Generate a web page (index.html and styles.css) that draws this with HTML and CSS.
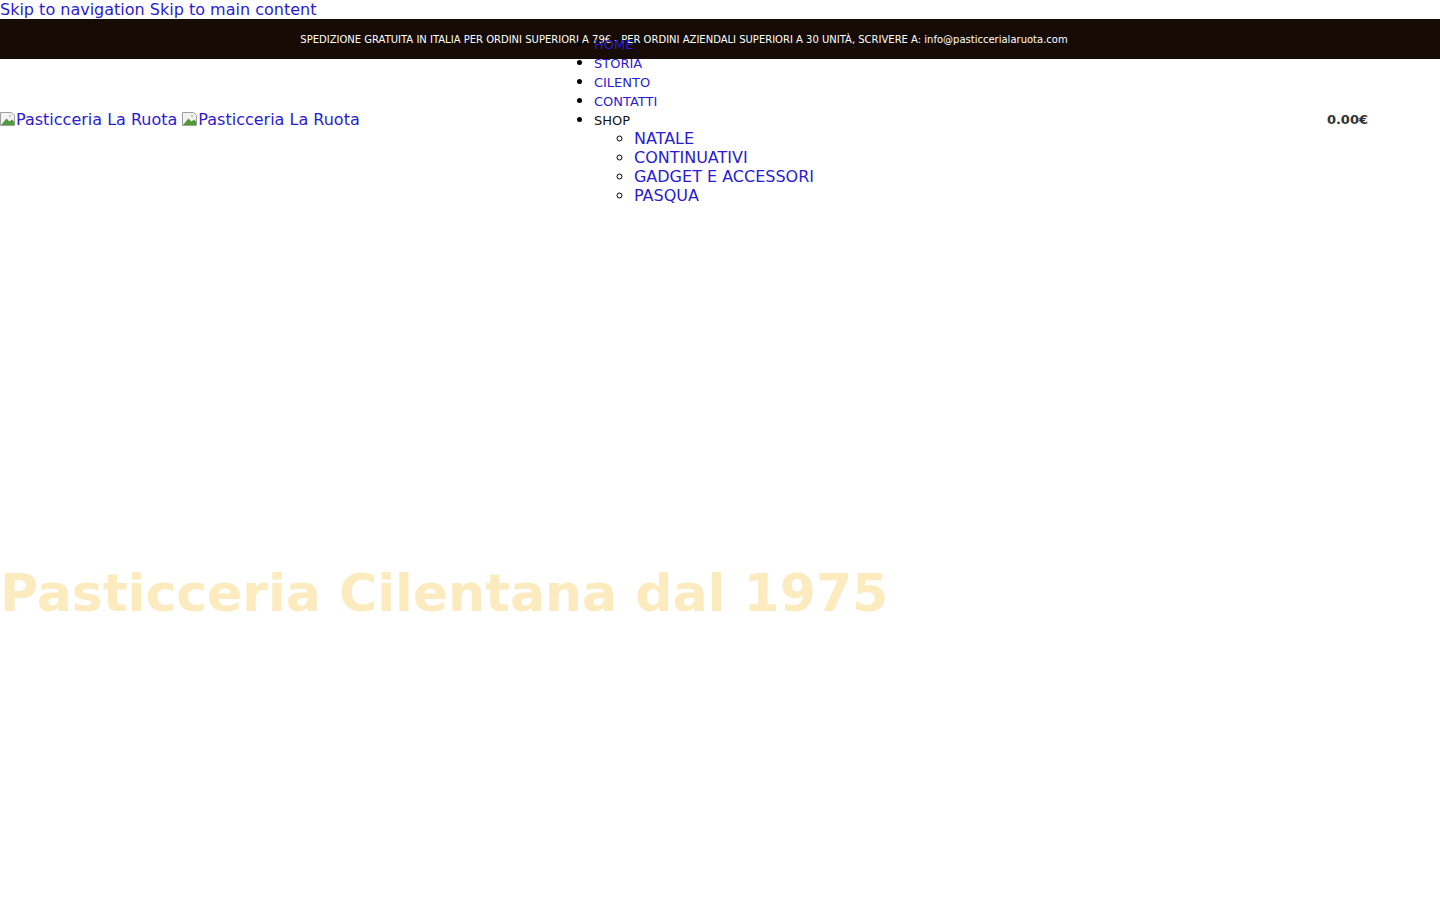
FILE: index.html
```html
<!DOCTYPE html>
<html lang="it">
<head>
<meta charset="utf-8">
<title>Pasticceria La Ruota</title>
<link rel="stylesheet" href="styles.css">
</head>
<body>
<div class="skips"><a href="#nav" class="link">Skip to navigation</a> <a href="#main" class="link">Skip to main content</a></div>
<div class="topbar">
  <div class="topbar-inner">SPEDIZIONE GRATUITA IN ITALIA PER ORDINI SUPERIORI A 79€ - PER ORDINI AZIENDALI SUPERIORI A 30 UNITÀ, SCRIVERE A: info@pasticcerialaruota.com</div>
</div>
<header class="header">
  <div class="logo">
    <a href="#" class="link logo-link"><svg class="broken" width="16" height="16" viewBox="0 0 16 16"><path d="M0.5 1.5h11l3 3v10h-14z" fill="#f2f2f2" stroke="#a0a0a0"/><path d="M1 14 L6.5 7.5 L9.5 10.5 L12 8.5 L14 10.5 V14Z" fill="#4f9a3a"/><circle cx="10" cy="5" r="1.3" fill="#c9c9c9"/></svg>Pasticceria La Ruota</a>
    <a href="#" class="link logo-link"><svg class="broken" width="16" height="16" viewBox="0 0 16 16"><path d="M0.5 1.5h11l3 3v10h-14z" fill="#f2f2f2" stroke="#a0a0a0"/><path d="M1 14 L6.5 7.5 L9.5 10.5 L12 8.5 L14 10.5 V14Z" fill="#4f9a3a"/><circle cx="10" cy="5" r="1.3" fill="#c9c9c9"/></svg>Pasticceria La Ruota</a>
  </div>
  <nav id="nav" class="nav">
    <ul class="menu">
      <li><a href="#" class="link top-item">HOME</a></li>
      <li><a href="#" class="link top-item">STORIA</a></li>
      <li><a href="#" class="link top-item">CILENTO</a></li>
      <li><a href="#" class="link top-item">CONTATTI</a></li>
      <li><span class="plain top-item">SHOP</span>
        <ul class="submenu">
          <li><a href="#" class="link">NATALE</a></li>
          <li><a href="#" class="link">CONTINUATIVI</a></li>
          <li><a href="#" class="link">GADGET E ACCESSORI</a></li>
          <li><a href="#" class="link">PASQUA</a></li>
        </ul>
      </li>
    </ul>
  </nav>
  <div class="cart"><span class="cart-total">0.00€</span></div>
</header>
<main id="main" class="hero">
  <h1 class="hero-title">Pasticceria Cilentana dal 1975</h1>
</main>
</body>
</html>
```
FILE: styles.css
```css
html, body {
  margin: 0;
  padding: 0;
  background: #ffffff;
  font-family: "DejaVu Sans", sans-serif;
  font-size: 16px;
  color: #000;
}
.link {
  color: #2b1ccf;
  text-decoration: none;
}
.skips {
  height: 19px;
  line-height: 19px;
  font-size: 16px;
}
.topbar {
  background: #170c05;
  height: 40px;
}
.topbar-inner {
  width: 1368px;
  text-align: center;
  color: #ffffff;
  font-size: 10px;
  line-height: 40px;
  padding-top: 1px;
}
.header {
  width: 1368px;
  height: 120px;
  display: flex;
  align-items: center;
}
.logo {
  flex: 1 1 0;
  display: flex;
  align-items: center;
  gap: 5px;
  font-size: 16px;
  line-height: 19px;
}
.logo-link {
  display: inline-flex;
  align-items: center;
}
.broken {
  display: block;
  flex: none;
}
.nav {
  flex: none;
  position: relative;
  z-index: 2;
}
.menu {
  margin: 0;
  padding-left: 40px;
  font-size: 16px;
  line-height: 19px;
}
.menu > li {
  list-style: disc;
}
.top-item {
  font-size: 13px;
  line-height: 13px;
}
.plain {
  color: #111;
}
.submenu {
  margin: 0;
  padding-left: 40px;
  font-size: 16px;
  line-height: 19px;
}
.submenu li {
  list-style: circle;
}
.cart {
  flex: 1 1 0;
  text-align: right;
  font-size: 13px;
  font-weight: bold;
  color: #333;
}
.hero {
  padding-top: 384px;
  height: 337px;
}
.hero-title {
  margin: 0;
  font-size: 52px;
  font-weight: bold;
  color: #fcebbf;
  line-height: 60px;
}
```
